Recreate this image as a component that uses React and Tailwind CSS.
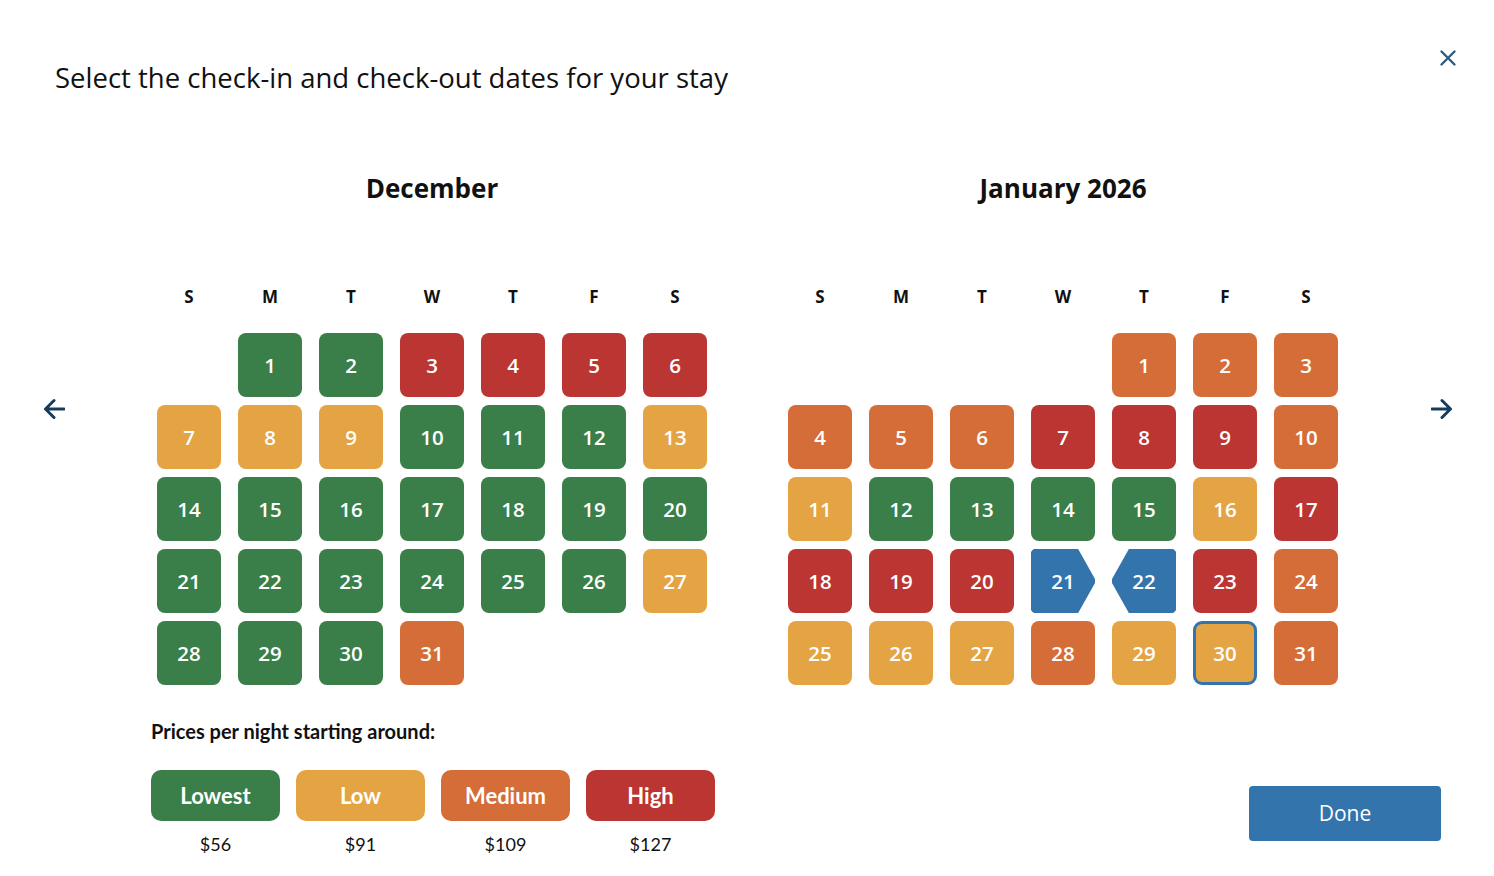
import React from 'react';

const G = 'bg-[#3a7f4a]';
const Y = 'bg-[#e5a444]';
const O = 'bg-[#d56d38]';
const R = 'bg-[#bb3532]';

const colorOf = { G, Y, O, R };

// [day, color] ; null = empty slot
const december = [
    null, [1, 'G'], [2, 'G'], [3, 'R'], [4, 'R'], [5, 'R'], [6, 'R'],
    [7, 'Y'], [8, 'Y'], [9, 'Y'], [10, 'G'], [11, 'G'], [12, 'G'], [13, 'Y'],
    [14, 'G'], [15, 'G'], [16, 'G'], [17, 'G'], [18, 'G'], [19, 'G'], [20, 'G'],
    [21, 'G'], [22, 'G'], [23, 'G'], [24, 'G'], [25, 'G'], [26, 'G'], [27, 'Y'],
    [28, 'G'], [29, 'G'], [30, 'G'], [31, 'O'],
];

const january = [
    null, null, null, null, [1, 'O'], [2, 'O'], [3, 'O'],
    [4, 'O'], [5, 'O'], [6, 'O'], [7, 'R'], [8, 'R'], [9, 'R'], [10, 'O'],
    [11, 'Y'], [12, 'G'], [13, 'G'], [14, 'G'], [15, 'G'], [16, 'Y'], [17, 'R'],
    [18, 'R'], [19, 'R'], [20, 'R'], [21, 'START'], [22, 'END'], [23, 'R'], [24, 'O'],
    [25, 'Y'], [26, 'Y'], [27, 'Y'], [28, 'O'], [29, 'Y'], [30, 'FOCUS'], [31, 'O'],
];

const weekdays = ['S', 'M', 'T', 'W', 'T', 'F', 'S'];

const cellText = "text-white text-[20.5px] font-semibold font-['Open_Sans',sans-serif]";

function Cell({ item }) {
    if (!item) return <div className="w-16 h-16" />;
    const [day, kind] = item;

    if (kind === 'START' || kind === 'END') {
        const d = kind === 'START'
            ? 'M8 0 H46 L64 32 L46 64 H8 Q0 64 0 56 V8 Q0 0 8 0 Z'
            : 'M18 0 H56 Q64 0 64 8 V56 Q64 64 56 64 H18 L0 32 Z';
        return (
            <div className="relative w-16 h-16 flex items-center justify-center">
                <svg className="absolute inset-0" width="64" height="64" viewBox="0 0 64 64">
                    <path d={d} fill="#3374ad" stroke="#3374ad" strokeWidth="2" strokeLinejoin="round" />
                </svg>
                <span className={`relative ${cellText}`}>{day}</span>
            </div>
        );
    }

    if (kind === 'FOCUS') {
        return (
            <div className={`w-16 h-16 rounded-[9px] border-[3px] border-[#3374ad] ${Y} flex items-center justify-center`}>
                <span className={cellText}>{day}</span>
            </div>
        );
    }

    return (
        <div className={`w-16 h-16 rounded-[8px] ${colorOf[kind]} flex items-center justify-center`}>
            <span className={cellText}>{day}</span>
        </div>
    );
}

function Month({ title, days }) {
    return (
        <div className="flex flex-col w-[550px]">
            <h3 className="text-center text-[26px] leading-8 font-bold text-[#111] font-['Open_Sans',sans-serif]">{title}</h3>
            <div className="grid grid-cols-[repeat(7,64px)] gap-x-[17px] mt-[83px]">
                {weekdays.map((w, i) => (
                    <div key={i} className="text-center text-[17px] leading-5 font-bold text-[#111] font-['Open_Sans',sans-serif]">{w}</div>
                ))}
            </div>
            <div className="grid grid-cols-[repeat(7,64px)] gap-x-[17px] gap-y-2 mt-[26px]">
                {days.map((item, i) => <Cell key={i} item={item} />)}
            </div>
        </div>
    );
}

function Arrow({ dir }) {
    const d = dir === 'left' ? 'M21 11H3 M11 2.5 L2.5 11 L11 19.5' : 'M1 11H19 M11 2.5 L19.5 11 L11 19.5';
    return (
        <svg width="22" height="22" viewBox="0 0 22 22" fill="none">
            <path d={d} stroke="#163e5c" strokeWidth="3" strokeLinecap="round" strokeLinejoin="round" />
        </svg>
    );
}

const legend = [
    { label: 'Lowest', price: '$56', c: G },
    { label: 'Low', price: '$91', c: Y },
    { label: 'Medium', price: '$109', c: O },
    { label: 'High', price: '$127', c: R },
];

export default function App() {
    return (
        <div className="relative w-full h-[876px] bg-white font-['Lato',sans-serif] text-[#111]">
            <button className="absolute top-[48px] left-[1438px] w-5 h-5 flex items-center justify-center">
                <svg width="18" height="18" viewBox="0 0 18 18" fill="none">
                    <path d="M2.5 2.5 L15.5 15.5 M15.5 2.5 L2.5 15.5" stroke="#2c5d80" strokeWidth="2.4" strokeLinecap="round" />
                </svg>
            </button>

            <div className="pt-[60px] pl-[55px]">
                <h2 className="text-[27.5px] leading-9 text-[#111] font-['Open_Sans',sans-serif]">Select the check-in and check-out dates for your stay</h2>
            </div>

            <div className="flex items-start mt-[76px]">
                <div className="ml-[43px] mt-[226px]"><Arrow dir="left" /></div>
                <div className="ml-[92px] flex gap-[81px]">
                    <Month title="December" days={december} />
                    <Month title="January 2026" days={january} />
                </div>
                <div className="ml-[93px] mt-[226px]"><Arrow dir="right" /></div>
            </div>

            <div className="flex items-start mt-[34px]">
                <div className="ml-[151px]">
                    <p className="text-[20px] leading-6 font-bold">Prices per night starting around:</p>
                    <div className="flex gap-4 mt-[27px]">
                        {legend.map((l) => (
                            <div key={l.label} className="flex flex-col items-center w-[129px]">
                                <div className={`w-full h-[51px] rounded-[10px] ${l.c} flex items-center justify-center text-white text-[22px] font-bold`}>
                                    {l.label}
                                </div>
                                <span className="mt-[11px] text-[18px] leading-6">{l.price}</span>
                            </div>
                        ))}
                    </div>
                </div>
                <button className="ml-auto mr-[53px] mt-[67px] w-[192px] h-[55px] rounded-[4px] bg-[#3374ad] text-white text-[21px] font-['Open_Sans',sans-serif]">
                    Done
                </button>
            </div>
        </div>
    );
}
